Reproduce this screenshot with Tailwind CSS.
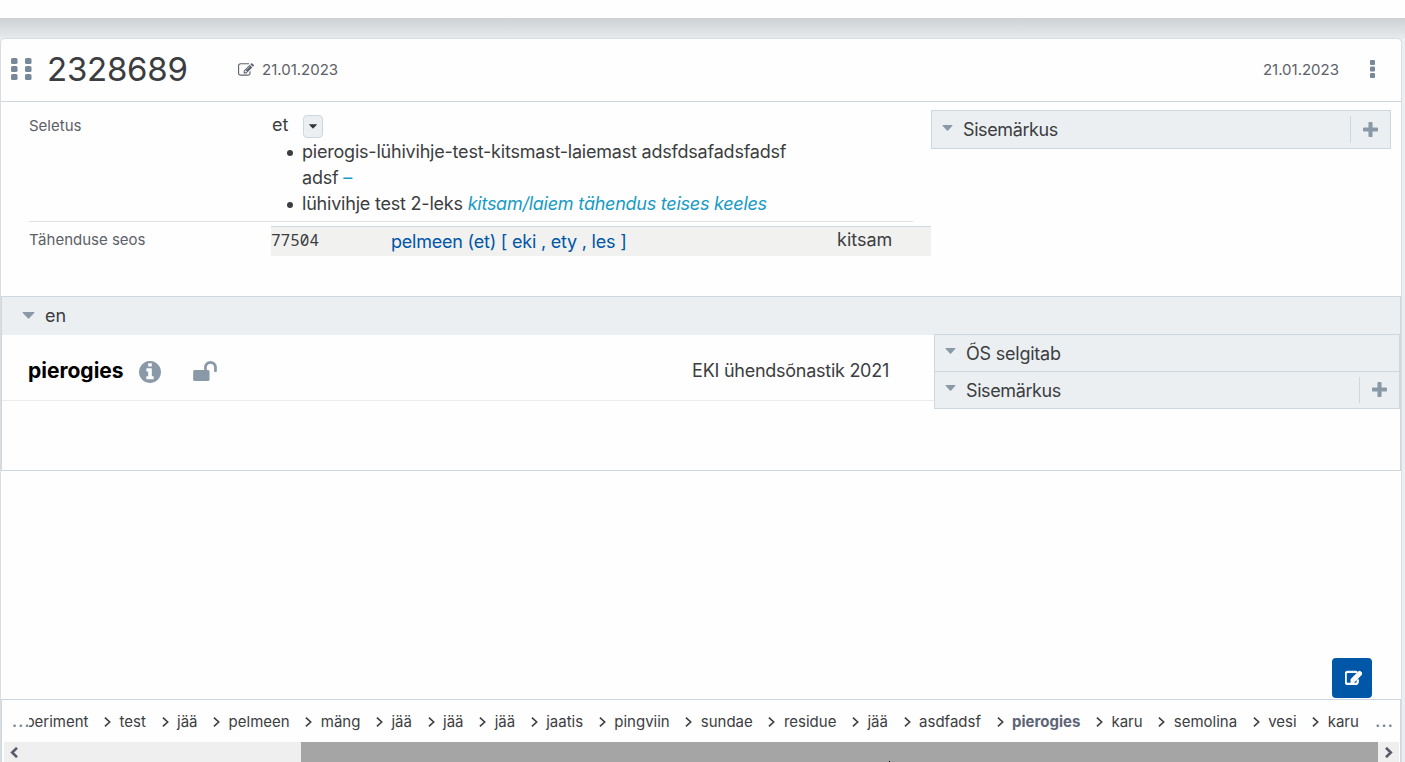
<!DOCTYPE html>
<html lang="et">
<head>
<meta charset="utf-8">
<title>2328689</title>
<script src="https://cdn.jsdelivr.net/npm/@tailwindcss/browser@4"></script>
</head>
<body class="h-[762px] w-[1405px] overflow-hidden bg-[#ebeff2] font-['Inter',sans-serif] text-[18px] text-[#3c3d40]">
<svg class="hidden">
  <symbol id="edit" viewBox="0 0 1792 1792"><path d="M888 1184l116-116-152-152-116 116v56h96v96h56zm440-720q-16-16-33 1l-350 350q-17 17-1 33t33-1l350-350q17-17 1-33zm80 594v190q0 119-84.500 203.500t-203.500 84.500h-832q-119 0-203.500-84.500t-84.500-203.500v-832q0-119 84.500-203.500t203.500-84.500h832q63 0 117 25 15 7 18 23 3 17-9 29l-49 49q-14 14-32 8-23-6-45-6h-832q-66 0-113 47t-47 113v832q0 66 47 113t113 47h832q66 0 113-47t47-113v-126q0-13 9-22l64-64q15-15 35-7t20 29zm-96-738l288 288-672 672h-288v-288zm444 132l-92 92-288-288 92-92q28-28 68-28t68 28l152 152q28 28 28 68t-28 68z"/></symbol>
  <symbol id="plus" viewBox="192 128 1408 1408"><path d="M1600 736v192q0 40-28 68t-68 28h-416v416q0 40-28 68t-68 28h-192q-40 0-68-28t-28-68v-416h-416q-40 0-68-28t-28-68v-192q0-40 28-68t68-28h416v-416q0-40 28-68t68-28h192q40 0 68 28t28 68v416h416q40 0 68 28t28 68z"/></symbol>
  <symbol id="caret" viewBox="0 0 12 7"><path d="M.6 0h10.800q.9.200.3 1L6.700 6.300q-.7.600-1.400 0L.3 1Q-.3.200.6 0z"/></symbol>
  <symbol id="chev" viewBox="0 0 7 10"><path d="M.9.600 5.700 5 .9 9.400" fill="none" stroke="currentColor" stroke-width="1.600"/></symbol>
</svg>
<div class="flex h-full flex-col">
  <div class="h-[18px] shrink-0 bg-[#fefefe]"></div>
  <div class="h-5 shrink-0 bg-linear-to-b from-[#cdd1d4] to-[#e6eaec]"></div>
  <main class="flex w-[1402px] grow flex-col rounded-t-[5px] border border-b-0 border-[#d9dde1] bg-[#fefefe]">
    <header class="flex h-[63px] shrink-0 items-center border-b border-[#ccd7df] pb-px pl-[10px]">
      <svg class="h-[23px] w-[21px] fill-[#778899]" viewBox="0 0 21 23"><rect width="6.500" height="6" rx="1.500"/><rect x="14" width="6.500" height="6" rx="1.500"/><rect y="8" width="6.500" height="6" rx="1.500"/><rect x="14" y="8" width="6.500" height="6" rx="1.500"/><rect y="16" width="6.500" height="6" rx="1.500"/><rect x="14" y="16" width="6.500" height="6" rx="1.500"/></svg>
      <h1 class="mb-[2px] ml-[15px] w-[191px] text-[33px] leading-[40px] tracking-[-0.250px]">2328689</h1>
      <svg class="h-4 w-4 fill-[#5d6470]"><use href="#edit"/></svg>
      <span class="mt-[2px] ml-[8px] text-[15px] text-[#5d6068]">21.01.2023</span>
      <span class="mt-[2px] ml-auto text-[15px] text-[#5d6068]">21.01.2023</span>
      <svg class="mr-[26px] mb-px ml-[31px] h-[18px] w-[5px] fill-[#778899]" viewBox="0 0 5 18"><rect width="5" height="5" rx="1"/><rect y="6.500" width="5" height="5" rx="1"/><rect y="13" width="5" height="5" rx="1"/></svg>
    </header>
    <section class="flex h-[194px] shrink-0">
      <div class="w-[930px] shrink-0">
        <div class="ml-[28px] mr-[18px] flex h-[120px] border-b border-[#dfe3e6] pt-[10px]">
          <span class="w-[243px] pt-[2px] text-[15px] leading-[24px] text-[#5d6068]">Seletus</span>
          <div class="leading-[26px]">
            <div class="flex items-center">
              <span class="w-[31px]">et</span>
              <span class="mt-[3px] flex h-[23px] w-5 items-center justify-center rounded-[4px] border border-[#ccd7df] bg-[#ebeff2]"><svg class="h-[5px] w-2 fill-[#333]"><use href="#caret"/></svg></span>
            </div>
            <ul class="w-[540px] list-none pt-px pl-[30px] tracking-[-0.210px]">
              <li class="-ml-[15px] flex"><span class="mt-[11px] mr-[9px] h-[6px] w-[6px] rounded-full bg-[#3c3d40]"></span><span>pierogis-lühivihje-test-kitsmast-laiemast adsfdsafadsfadsf<br>adsf <span class="text-[#179bc5]">–</span></span></li>
              <li class="-ml-[15px] flex"><span class="mt-[11px] mr-[9px] h-[6px] w-[6px] rounded-full bg-[#3c3d40]"></span><span>lühivihje test 2-leks <em class="tracking-[-0.250px] text-[#179bc5]">kitsam/laiem tähendus teises keeles</em></span></li>
            </ul>
          </div>
        </div>
        <div class="flex h-[34px] pt-1">
          <span class="w-[270px] pl-[28px] pt-[2px] text-[15px] leading-[24px] text-[#5d6068]">Tähenduse seos</span>
          <div class="flex h-[30px] grow border-t border-[#ccd7df] bg-[#f1f1f0] leading-[26px]">
            <span class="w-[120px] font-['Noto_Sans_Mono','DejaVu_Sans_Mono',monospace] text-[16px]">77504</span>
            <span class="w-[446px] pt-[2px] tracking-[-0.220px] text-[#0056a7]">pelmeen (et) [ eki , ety , les ]</span>
            <span>kitsam</span>
          </div>
        </div>
      </div>
      <div class="mt-2 flex h-[39px] w-[460px] items-center border border-[#ccd7df] bg-[#ebeff2]">
        <svg class="mb-[3px] ml-[10px] h-[6px] w-[11px] fill-[#8a99a8]"><use href="#caret"/></svg>
        <span class="ml-[10px] tracking-[-0.400px]">Sisemärkus</span>
        <span class="ml-auto flex h-[27px] w-10 items-center justify-center border-l border-[#ccd7df]"><svg class="mb-px h-[15px] w-[15px] fill-[#8a99a8]"><use href="#plus"/></svg></span>
      </div>
    </section>
    <section class="h-[175px] shrink-0 border border-[#ccd7df]">
      <div class="flex h-[38px] items-center bg-[#ebeff2] pl-5">
        <svg class="mb-[2px] h-[7px] w-[13px] fill-[#8a99a8]"><use href="#caret"/></svg>
        <span class="mb-px ml-[10px]">en</span>
      </div>
      <div class="flex">
        <div class="flex h-[66px] w-[932px] shrink-0 items-center border-b border-[#ebebeb] pl-[26px] pt-[6px]">
          <b class="w-[111px] text-[21px] font-bold text-black">pierogies</b>
          <svg class="mt-[2px] h-[22px] w-[22px] fill-[#8a99a8]" viewBox="128 128 1536 1536"><path d="M1152 1376v-160q0-14-9-23t-23-9h-96v-512q0-14-9-23t-23-9h-320q-14 0-23 9t-9 23v160q0 14 9 23t23 9h96v320h-96q-14 0-23 9t-9 23v160q0 14 9 23t23 9h448q14 0 23-9t9-23zm-128-896v-160q0-14-9-23t-23-9h-192q-14 0-23 9t-9 23v160q0 14 9 23t23 9h192q14 0 23-9t9-23zm640 416q0 209-103 385.500t-279.500 279.500-385.500 103-385.500-103-279.500-279.500-103-385.500 103-385.500 279.500-279.500 385.500-103 385.500 103 279.500 279.500 103 385.500z"/></svg>
          <svg class="mt-px ml-[31.500px] h-[20px] w-[24px] fill-[#8a99a8]" viewBox="64 128 1664 1408"><path d="M1728 576v256q0 26-19 45t-45 19h-64q-26 0-45-19t-19-45v-256q0-106-75-181t-181-75-181 75-75 181v192h96q40 0 68 28t28 68v576q0 40-28 68t-68 28h-960q-40 0-68-28t-28-68v-576q0-40 28-68t68-28h672v-192q0-185 131.500-316.500t316.500-131.500 316.500 131.500 131.500 316.500z"/></svg>
          <span class="mr-[45px] ml-auto tracking-[-0.260px]">EKI ühendsõnastik 2021</span>
        </div>
        <div class="-mt-px flex h-[75px] w-[466px] flex-col border border-[#ccd7df] bg-[#ebeff2]">
          <div class="flex h-[37px] items-center border-b border-[#ccd7df]">
            <svg class="mb-[5px] ml-[10px] h-[6px] w-[11px] fill-[#8a99a8]"><use href="#caret"/></svg>
            <span class="ml-[10px] tracking-[-0.220px]">ÕS selgitab</span>
          </div>
          <div class="flex h-[36px] items-center">
            <svg class="mb-[5px] ml-[10px] h-[6px] w-[11px] fill-[#8a99a8]"><use href="#caret"/></svg>
            <span class="ml-[10px] tracking-[-0.400px]">Sisemärkus</span>
            <span class="ml-auto flex h-[26px] w-10 items-center justify-center border-l border-[#ccd7df]"><svg class="mb-[2px] h-[15px] w-[15px] fill-[#8a99a8]"><use href="#plus"/></svg></span>
          </div>
        </div>
      </div>
    </section>
    <div class="flex grow items-end justify-end pr-[29px] pb-px">
      <button class="flex h-10 w-10 items-center justify-center rounded-[4px] bg-[#0056a7]"><svg class="ml-[3px] h-[17px] w-[17px] fill-white stroke-white stroke-[110]"><use href="#edit"/></svg></button>
    </div>
    <footer class="h-[63px] shrink-0 border border-b-0 border-[#ccd7df]">
      <nav class="flex h-[42px] items-center pt-[2px] pl-[10px] text-[15px] whitespace-nowrap text-[#3c3d40]">
        <span class="w-[17px] font-bold tracking-[1.200px] text-[#778899]">...</span>
        <span class="flex w-[59.500px] justify-end overflow-hidden">periment</span>
        <div class="flex items-center">
          <svg class="ml-[15.600px] mr-[8.500px] h-[10px] w-[7px]"><use href="#chev"/></svg><span>test</span>
          <svg class="ml-[15.600px] mr-[8.500px] h-[10px] w-[7px]"><use href="#chev"/></svg><span>jää</span>
          <svg class="ml-[15.600px] mr-[8.500px] h-[10px] w-[7px]"><use href="#chev"/></svg><span>pelmeen</span>
          <svg class="ml-[15.600px] mr-[8.500px] h-[10px] w-[7px]"><use href="#chev"/></svg><span>mäng</span>
          <svg class="ml-[15.600px] mr-[8.500px] h-[10px] w-[7px]"><use href="#chev"/></svg><span>jää</span>
          <svg class="ml-[15.600px] mr-[8.500px] h-[10px] w-[7px]"><use href="#chev"/></svg><span>jää</span>
          <svg class="ml-[15.600px] mr-[8.500px] h-[10px] w-[7px]"><use href="#chev"/></svg><span>jää</span>
          <svg class="ml-[15.600px] mr-[8.500px] h-[10px] w-[7px]"><use href="#chev"/></svg><span>jaatis</span>
          <svg class="ml-[15.600px] mr-[8.500px] h-[10px] w-[7px]"><use href="#chev"/></svg><span>pingviin</span>
          <svg class="ml-[15.600px] mr-[8.500px] h-[10px] w-[7px]"><use href="#chev"/></svg><span>sundae</span>
          <svg class="ml-[15.600px] mr-[8.500px] h-[10px] w-[7px]"><use href="#chev"/></svg><span>residue</span>
          <svg class="ml-[15.600px] mr-[8.500px] h-[10px] w-[7px]"><use href="#chev"/></svg><span>jää</span>
          <svg class="ml-[15.600px] mr-[8.500px] h-[10px] w-[7px]"><use href="#chev"/></svg><span>asdfadsf</span>
          <svg class="ml-[15.600px] mr-[8.500px] h-[10px] w-[7px]"><use href="#chev"/></svg><b class="font-bold text-[#5d6478]">pierogies</b>
          <svg class="ml-[15.600px] mr-[8.500px] h-[10px] w-[7px]"><use href="#chev"/></svg><span>karu</span>
          <svg class="ml-[15.600px] mr-[8.500px] h-[10px] w-[7px]"><use href="#chev"/></svg><span>semolina</span>
          <svg class="ml-[15.600px] mr-[8.500px] h-[10px] w-[7px]"><use href="#chev"/></svg><span>vesi</span>
          <svg class="ml-[15.600px] mr-[8.500px] h-[10px] w-[7px]"><use href="#chev"/></svg><span>karu</span>
        </div>
        <span class="ml-auto mr-[6px] font-bold tracking-[1.200px] text-[#778899]">...</span>
      </nav>
      <div class="mx-[2px] mr-px flex h-5 items-center bg-[#efefef]">
        <svg class="ml-[6px] h-[11px] w-[8px]" viewBox="0 0 8 11"><path d="M7 .8 2.200 5.500 7 10.200" fill="none" stroke="#5a5b6a" stroke-width="2.600"/></svg>
        <div class="ml-[283px] h-5 w-[1077px] bg-[#a5a5a5]"></div>
        <svg class="ml-[7px] h-[11px] w-[8px]" viewBox="0 0 8 11"><path d="M1 .8 5.800 5.500 1 10.200" fill="none" stroke="#5a5b6a" stroke-width="2.600"/></svg>
      </div>
    </footer>
  </main>
</div>
<i class="absolute top-[761px] left-[889px] h-px w-px bg-black"></i>
</body>
</html>
